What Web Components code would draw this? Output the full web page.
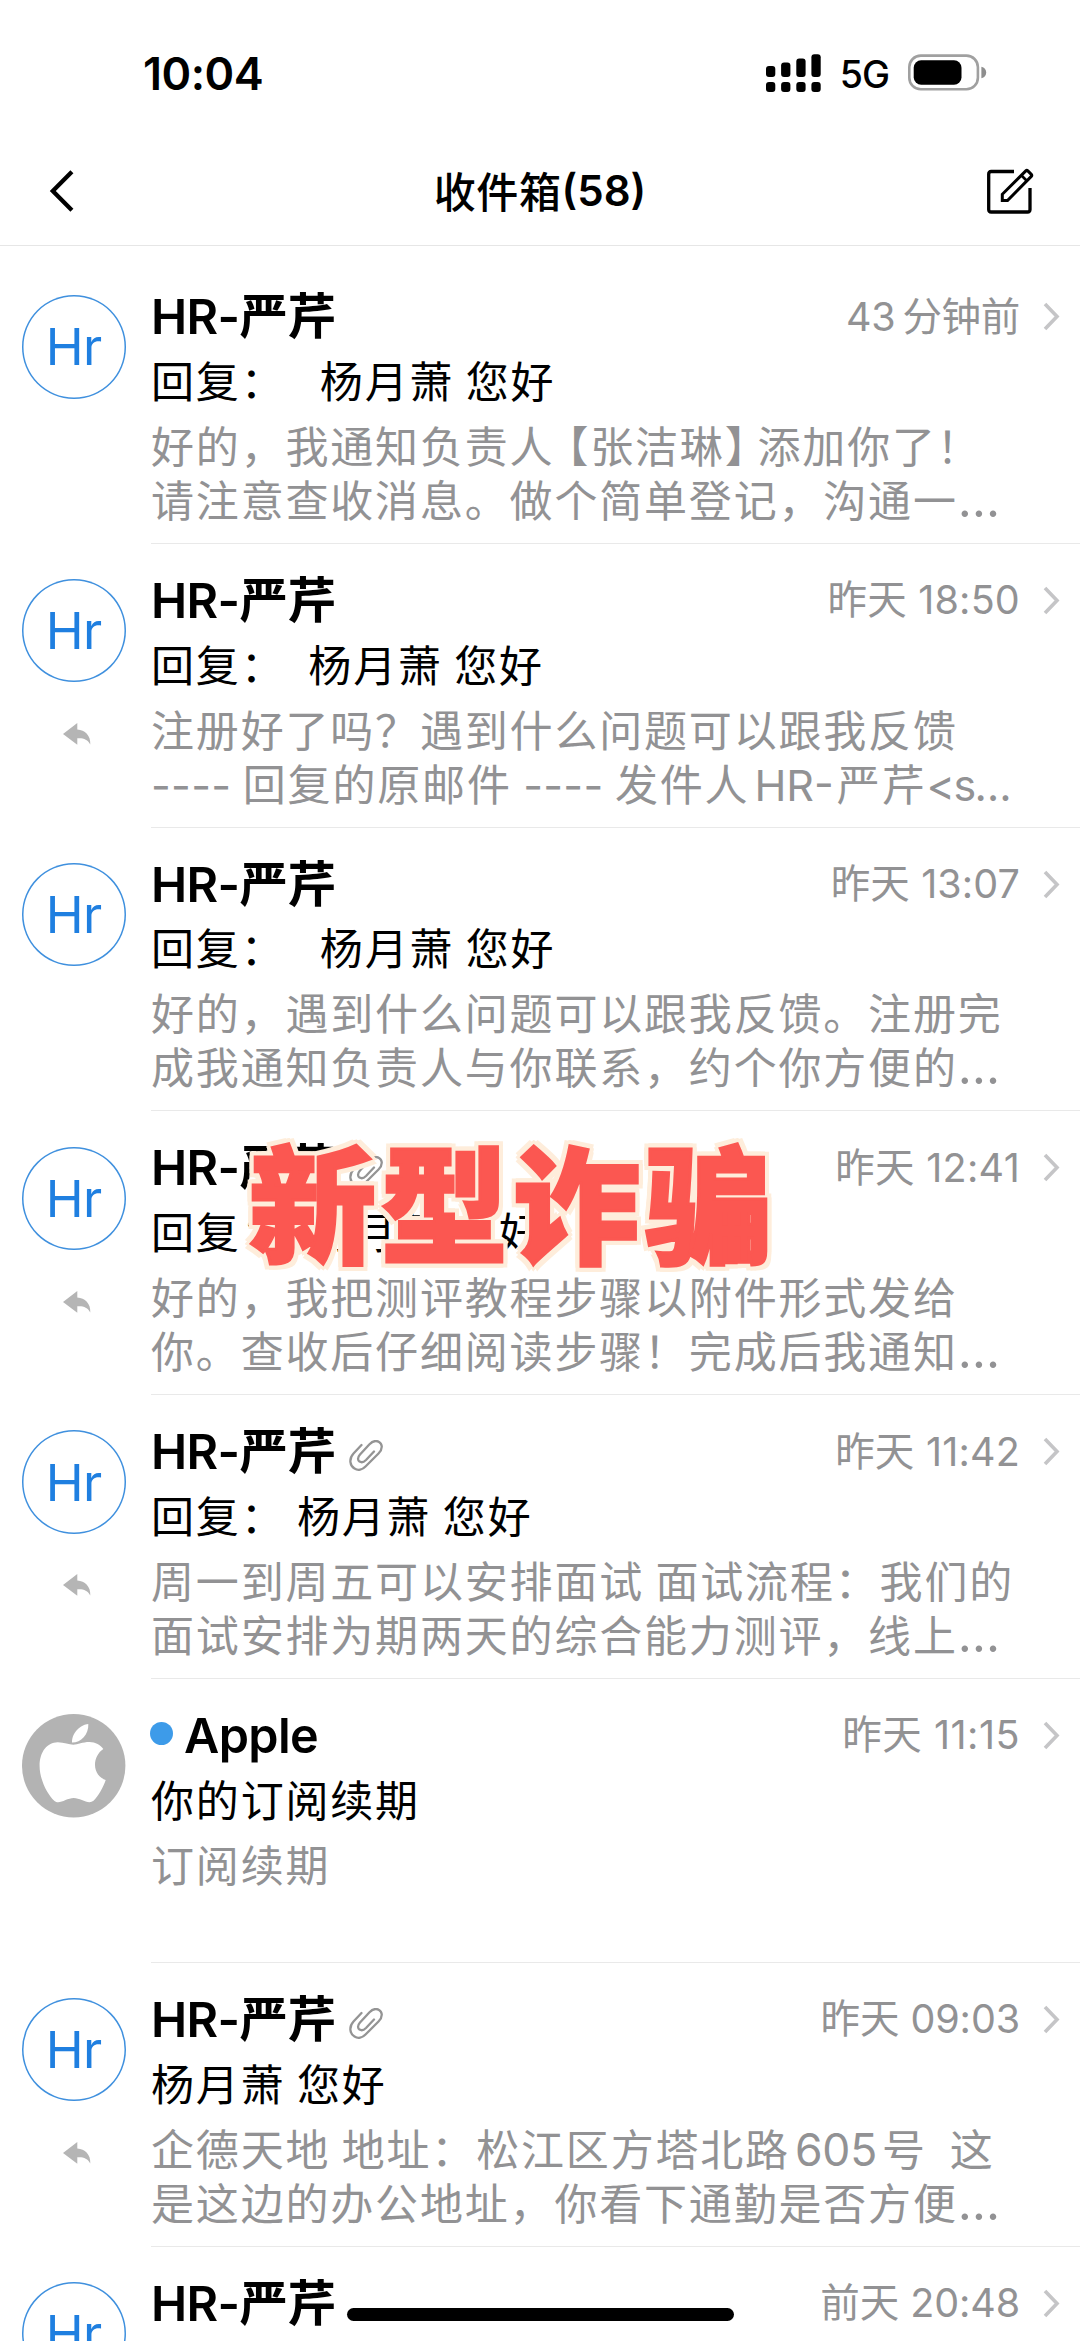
<!DOCTYPE html>
<html lang="zh-CN">
<head>
<meta charset="utf-8">
<title>收件箱</title>
<style>
html,body{margin:0;padding:0;background:#fff}
body{width:1080px;height:2341px;overflow:hidden;position:relative}
</style>
</head>
<body>
<mail-app></mail-app>
<script>
const CJK = '"Noto Sans CJK SC",sans-serif';
const LAT = 'Inter,"Noto Sans CJK SC",sans-serif';
function define(name, html) {
  const t = document.createElement('template');
  t.innerHTML = html;
  customElements.define(name, class extends HTMLElement {
    constructor() {
      super();
      this.attachShadow({ mode: 'open' }).appendChild(t.content.cloneNode(true));
    }
  });
}

define('status-bar', `
<style>
:host{display:flex;align-items:center;flex:none;height:145px;box-sizing:border-box;padding:0 93px 0 143px;font-family:${LAT};color:#000}
.time{font-size:45px;font-weight:600;line-height:60px;letter-spacing:-.5px;flex:1;margin-top:2px}
.net{font-size:37.5px;font-weight:500;line-height:50px;letter-spacing:-1px;margin:5px 19px 0 19px}
svg{display:block}
</style>
<span class="time">10:04</span>
<svg width="55" height="38" viewBox="0 0 55 38"><g>
<rect x="0" y="12" width="9.3" height="11" rx="3"/><rect x="15.1" y="8.6" width="9.3" height="14.4" rx="3"/><rect x="30.3" y="4.6" width="9.3" height="18.4" rx="3"/><rect x="45.4" y="0.3" width="9.3" height="22.7" rx="3"/>
<rect x="0" y="28" width="9.3" height="10" rx="3"/><rect x="15.1" y="28" width="9.3" height="10" rx="3"/><rect x="30.3" y="28" width="9.3" height="10" rx="3"/><rect x="45.4" y="28" width="9.3" height="10" rx="3"/></g></svg>
<span class="net">5G</span>
<svg width="79" height="37" viewBox="0 0 79 37"><rect x="1.3" y="1.6" width="68.6" height="33.6" rx="11.5" fill="none" stroke="#a0a0a0" stroke-width="2.6"/><rect x="5.7" y="6.3" width="47.8" height="24.4" rx="7.5"/><path d="M73.4 12.8c3 .6 4.8 2.8 4.8 5.7s-1.8 5.100-4.8 5.700z" fill="#8e8e8e"/></svg>
`);

define('nav-bar', `
<style>
:host{display:flex;align-items:center;justify-content:space-between;flex:none;height:101px;box-sizing:border-box;padding:0 46px 9px 49px;border-bottom:1px solid #e6e6e6;font-family:${CJK};color:#000}
h1{margin:0 4px 0 0;font-size:42px;font-weight:500;line-height:58px;letter-spacing:.6px;display:flex}
i{font:600 42px/60px ${LAT};letter-spacing:0}
svg{display:block}
.b{width:50px}
</style>
<svg class="b" width="50" height="46" viewBox="0 0 50 46"><path d="M22.9 3.800L3.800 23L22.900 42.200" fill="none" stroke="#000" stroke-width="4.300"/></svg>
<h1><slot></slot><i>(58)</i></h1>
<svg width="49" height="48" viewBox="0 0 49 48" fill="none" stroke="#000" stroke-width="3.300"><path d="M29 4.500H6.200Q3.700 4.500 3.700 7V42.500Q3.700 45 6.200 45H42.500Q45 45 45 42.500V21" /><path d="M17.300 33.500v-6.200L40.800 3.900Q41.800 2.900 42.800 3.900L46.300 7.400Q47.300 8.400 46.300 9.400L22.500 33.500z" stroke-width="3"/><path d="M36.500 8.500l5.500 5.500" stroke-width="2.600"/></svg>
`);

define('hr-avatar', `
<style>
:host{display:flex;align-items:center;justify-content:center;width:103.500px;height:103.500px;box-sizing:border-box;box-shadow:inset 0 0 0 1.500px #3f90de;border-radius:50%;color:#1f7fe0;font:400 51px/60px ${LAT};letter-spacing:-.5px;padding-top:1px}
</style><slot></slot>`);

define('apple-avatar', `
<style>:host{display:block;width:103.500px;height:103.500px}svg{display:block}</style>
<svg width="103.5" height="103.5" viewBox="0 0 103.5 103.5"><circle cx="51.7" cy="51.7" r="51.7" fill="#b3b3b3"/>
<path fill="#fff" d="M51.300 30.700C56 30.700 60.500 28 67.500 28C73.500 28 78.500 31 81.300 35C76 38.500 73 44.500 73 51C73 58 77.500 64 83.700 66C81.500 73 76 82.500 71.500 86.800C66 91 59 84 51.700 84C44.500 84 37.500 91 32.500 87C24.500 79.500 17.600 64.500 17.600 52C17.600 37.500 25.500 28.500 35.500 28.300C42 28.200 47 30.700 51.300 30.700Z"/>
<path fill="#fff" d="M66.300 10C59 10.500 49.500 18.500 50 28.600C58.500 28.800 67 20.500 66.300 10Z"/></svg>`);

define('reply-mark', `
<style>:host{display:block;width:28px;height:22px}svg{display:block}</style>
<svg width="28" height="22" viewBox="0 0 28 22"><path fill="#b5b5b5" d="M0 11L14.300 0V6.600C22 7.200 27.800 12.500 27.300 21.500C24.500 16.200 20.500 14.800 14.300 15.200V21.700Z"/></svg>`);

define('clip-mark', `
<style>:host{display:block;width:34px;height:31px}svg{display:block}</style>
<svg width="34" height="31" viewBox="0 0 34 31" fill="none" stroke="#949494" stroke-width="2.300" stroke-linecap="round" stroke-linejoin="round"><path d="M12.500 5L4.500 13.500C-.5 19 1 26 5.500 28.600C9 30.700 13.500 29.800 16.500 26.500L29.500 13.500C34.500 8.500 33 3.500 30 1.900C27 .3 23.500 1.200 20.500 4.200L11 14.500C8 18 9 20.500 10.500 21.600C12.500 22.800 15 22 17 20L25 11.500"/></svg>`);

define('mail-row', `
<style>
:host{display:grid;grid-template-columns:151px 1fr;height:283.800px;font-family:${CJK};color:#000}
.side{display:flex;flex-direction:column;padding:35.200px 0 0 22px}
.side ::slotted(reply-mark){margin:40.500px 0 0 40.700px}
.body{box-sizing:border-box;border-bottom:1px solid #e9e9e9;padding-top:26.500px;min-width:0}
.top{display:flex;align-items:center;height:60px;padding-right:20px}
.name{font:600 48.500px/60px ${LAT};letter-spacing:-.6px;display:flex;align-items:center;padding-top:1px}
.name ::slotted(clip-mark){margin:7px 0 0 13.500px}
.dot{display:none;width:23px;height:23px;border-radius:50%;background:#3d9be9;margin:-4px 11px 0 -1px}
:host([unread]) .dot{display:block}
.time{margin-left:auto;font:400 39.500px/60px ${LAT};color:#929294;white-space:pre}
.chev{display:block;margin-left:23px}
.subject,.preview{font-size:43px;line-height:54px;letter-spacing:1.820px;white-space:pre;text-spacing-trim:space-all;font-kerning:none}
.subject{margin-top:5.300px}
.preview{margin-top:11px;color:#929294}
</style>
<div class="side"><slot name="avatar"></slot><slot name="mark"></slot></div>
<div class="body">
<div class="top"><span class="dot"></span><span class="name"><slot name="name"></slot><slot name="clip"></slot></span><span class="time"><slot name="time"></slot></span>
<svg class="chev" width="17" height="29" viewBox="0 0 17 29"><path d="M2 2L14 14.500L2 27" fill="none" stroke="#c5c5c7" stroke-width="3.600"/></svg></div>
<div class="subject"><slot name="subject"></slot></div>
<div class="preview"><slot></slot></div>
</div>`);

define('title-sticker', `
<style>
:host{position:absolute;left:249px;top:1119px;font:900 127px/160px ${CJK};letter-spacing:5px;color:#fb5751;-webkit-text-stroke:3px #fb5751;white-space:nowrap;
filter:drop-shadow(4px 0 0 #feeddb) drop-shadow(-4px 0 0 #feeddb) drop-shadow(0 4px 0 #feeddb) drop-shadow(0 -4px 0 #feeddb)}
</style><slot></slot>`);

define('home-bar', `<style>:host{position:absolute;left:346.500px;top:2308px;width:387px;height:13px;border-radius:6.500px;background:#000}</style>`);

const mails = [
 { time:'43<s></s>分钟前', ls:-.3, sub:'回复：   杨月萧 您好', lines:['好的，我通知负责人<b class="l">【</b>张洁琳<b class="r">】</b>添加你了！','请注意查收消息。做个简单登记，沟通一<i class="e">…</i>'] },
 { time:'昨天 18:50', ls:.2, sub:'回复：  杨月萧 您好', mark:1, lines:['注册好了吗？遇到什么问题可以跟我反馈','<i class="h">----</i> 回复的原邮件 <i class="h">----</i> 发件人<i class="g">HR-</i>严芹<i class="m">&lt;s…</i>'] },
 { time:'昨天 13:07', ls:.1, sub:'回复：   杨月萧 您好', lines:['好的，遇到什么问题可以跟我反馈。注册完','成我通知负责人与你联系，约个你方便的<i class="e">…</i>'] },
 { time:'昨天 12:41', ls:.3, sub:'回复：  杨月萧 您好', mark:1, clip:1, lines:['好的，我把测评教程步骤以附件形式发给','你。查收后仔细阅读步骤！完成后我通知<i class="e">…</i>'] },
 { time:'昨天 11:42', ls:.2, sub:'回复： 杨月萧 您好', mark:1, clip:1, lines:['周一到周五可以安排面试 面试流程：我们的','面试安排为期两天的综合能力测评，线上<i class="e">…</i>'] },
 { time:'昨天 11:15', ls:.5, sub:'你的订阅续期', apple:1, lines:['订阅续期'] },
 { time:'昨天 09:03', ls:-.1, sub:'杨月萧 您好', mark:1, clip:1, lines:['企德天地 地址：松江区方塔北路<i class="d">605</i>号  这','是这边的办公地址，你看下通勤是否方便<i class="e">…</i>'] },
 { time:'前天 20:48', ls:-.1, lines:[] }
];
define('mail-app', `
<style>
:host{display:flex;flex-direction:column;height:2341px;overflow:hidden;background:#fff}
.list{display:flex;flex-direction:column;padding-top:14px;flex:1;min-height:0;overflow:hidden}
mail-row{flex:none}
i{font-style:normal;font-family:${LAT};line-height:0;letter-spacing:0}
i.e{margin-left:0;font-size:49px}
i.h{letter-spacing:.3px}
i.g{margin-left:5px;margin-right:3px}
i.m{letter-spacing:-1.500px}
i.d{margin:0 5px 0 5px;font-size:44.500px;letter-spacing:-.2px}
s{display:inline-block;width:7px}
b{font-weight:400}
b.l{margin-left:-9px}
b.r{margin-right:-12px}
</style>
<status-bar></status-bar>
<nav-bar>收件箱</nav-bar>
<div class="list">${mails.map(m => `<mail-row${m.apple ? ' unread' : ''}>
${m.apple ? '<apple-avatar slot="avatar"></apple-avatar>' : '<hr-avatar slot="avatar">Hr</hr-avatar>'}
${m.mark ? '<reply-mark slot="mark"></reply-mark>' : ''}
<span slot="name">${m.apple ? 'Apple' : 'HR-严芹'}</span>${m.clip ? '<clip-mark slot="clip"></clip-mark>' : ''}
<span slot="time" style="letter-spacing:${m.ls}px">${m.time}</span>
${m.sub ? `<span slot="subject">${m.sub}</span>` : ''}
${m.lines.map(l => `<div>${l}</div>`).join('')}</mail-row>`.replace(/>\n+</g, '><')).join('')}</div>
<title-sticker>新型诈骗</title-sticker>
<home-bar></home-bar>
`);
</script>
</body>
</html>
